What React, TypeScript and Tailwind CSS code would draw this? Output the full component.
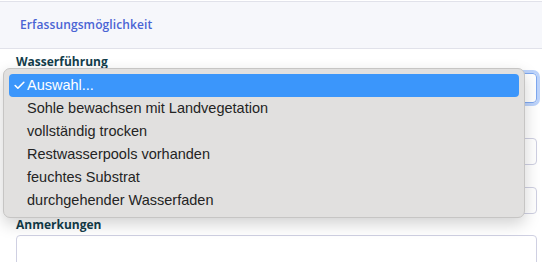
import { Check } from "lucide-react"

const options = [
  "Auswahl...",
  "Sohle bewachsen mit Landvegetation",
  "vollständig trocken",
  "Restwasserpools vorhanden",
  "feuchtes Substrat",
  "durchgehender Wasserfaden",
]

const labelFont = { fontFamily: '"Open Sans", "Noto Sans", sans-serif' }

export default function App() {
  return (
    <div
      className="relative w-[542px] h-[262px] overflow-hidden bg-white"
      style={labelFont}
    >
      {/* Section header */}
      <div className="pt-px">
        <div className="h-[48px] flex items-center px-5 bg-[#f6f7fb] border-y border-[#e1e2ea]">
          <span className="text-[12px] font-semibold text-[#4a64d4] tracking-[0.1px]">
            Erfassungsmöglichkeit
          </span>
        </div>
      </div>

      {/* Form */}
      <div className="pl-4 pr-[5px] pt-[5px] flex flex-col">
        <label className="text-[12px] font-bold text-[#133d4b] leading-[16px]">Wasserführung</label>
        <div className="mt-[3px] h-[30px] rounded-[4px] border border-[#7ea8f0] ring-[3px] ring-[#bcd3fb]" />
        <div className="mt-[35px] h-[27px] rounded-[4px] border border-[#cfd0e2]" />
        <div className="mt-[22px] h-[27px] rounded-[4px] border border-[#cfd0e2]" />
        <label className="mt-[3px] text-[12px] font-bold text-[#133d4b] leading-[16px]">Anmerkungen</label>
        <div className="mt-[2px] h-[60px] rounded-[4px] border border-[#cfd0e2]" />
      </div>

      {/* Open native select menu */}
      <div
        className="absolute left-[3px] top-[68px] w-[522px] rounded-[7px] border border-[#c6c5c4] bg-[#e1e0df] p-[5px] shadow-[0_6px_16px_rgba(0,0,0,0.18)]"
        style={{ fontFamily: '"Liberation Sans", Arial, sans-serif' }}
      >
        {options.map((opt, i) => (
          <div
            key={opt}
            className={`h-[23px] flex items-center rounded-[4px] text-[14.5px] ${
              i === 0 ? "bg-[#3b96fb] text-white" : "text-[#242424]"
            }`}
          >
            <span className="w-[18px] shrink-0 pl-[4px] flex items-center">
              {i === 0 && <Check className="w-[13px] h-[13px]" strokeWidth={3} />}
            </span>
            <span>{opt}</span>
          </div>
        ))}
      </div>
    </div>
  )
}
